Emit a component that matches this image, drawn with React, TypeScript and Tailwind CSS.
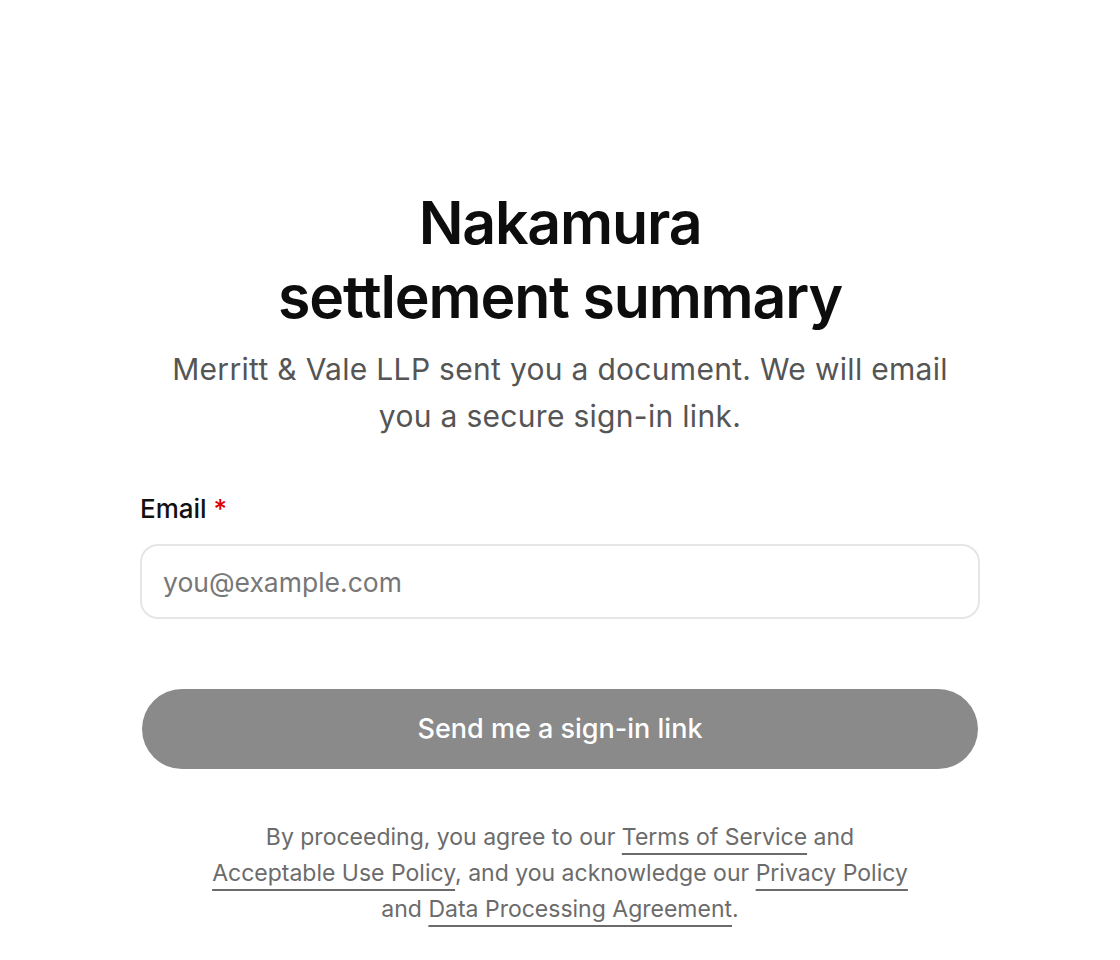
import { useState } from "react";

export default function App() {
  const [email, setEmail] = useState("");

  return (
    <div
      className="min-h-screen bg-white px-[140px] pt-[186px] text-[#111]"
      style={{ fontFamily: "Inter, 'Noto Sans', sans-serif" }}
    >
      <div className="mx-auto w-[840px]">
        <h1 className="text-center text-[59px] font-semibold leading-[74px] tracking-[-0.02em] text-[#0d0d0d]">
          Nakamura
          <br />
          settlement summary
        </h1>
        <p className="mx-auto mt-[12px] max-w-[800px] text-center text-[30px] leading-[47px] tracking-[0.01em] text-[#555]">
          Merritt &amp; Vale LLP sent you a document. We will email you a secure sign-in link.
        </p>

        <form className="mt-[52px]" onSubmit={(event) => event.preventDefault()}>
          <label className="block text-[26px] font-medium leading-[34px] text-[#111]">
            Email <span className="text-[#e00000]">*</span>
          </label>
          <input
            type="email"
            value={email}
            onChange={(event) => setEmail(event.target.value)}
            placeholder="you@example.com"
            className="mt-[18px] block h-[75px] w-full rounded-[18px] border-2 border-[#e6e6e6] bg-white px-[21px] text-[26.5px] text-[#111] outline-none placeholder:text-[#777]"
          />
          <button
            type="submit"
            className="mx-auto mt-[70px] block h-[80px] w-[836px] rounded-full bg-[#8a8a8a] text-[27px] font-medium text-white"
          >
            Send me a sign-in link
          </button>
        </form>

        <p className="mx-auto mt-[50px] max-w-[710px] text-center text-[23px] leading-[36px] text-[#6b6b6b]">
          By proceeding, you agree to our{" "}
          <a className="underline decoration-[#6b6b6b] decoration-2 underline-offset-[8px]">Terms of Service</a> and{" "}
          <a className="underline decoration-[#6b6b6b] decoration-2 underline-offset-[8px]">Acceptable Use Policy</a>, and
          you acknowledge our{" "}
          <a className="underline decoration-[#6b6b6b] decoration-2 underline-offset-[8px]">Privacy Policy</a> and{" "}
          <a className="underline decoration-[#6b6b6b] decoration-2 underline-offset-[8px]">Data Processing Agreement</a>.
        </p>
      </div>
    </div>
  );
}
